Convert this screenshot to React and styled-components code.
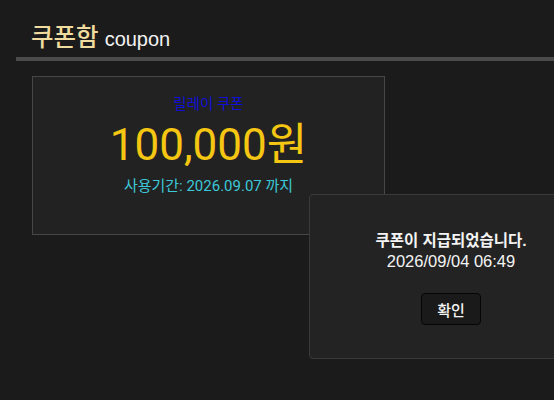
import React from "react";
import styled, { createGlobalStyle } from "styled-components";

const Global = createGlobalStyle`
  html, body { margin: 0; padding: 0; background: #1b1b1b; }
  body { font-family: "Liberation Sans", "Noto Sans CJK KR", sans-serif; overflow: hidden; }
  #root { width: 554px; height: 400px; position: relative; overflow: hidden; }
`;

const Page = styled.div`
  width: 554px;
  height: 400px;
  background: #1b1b1b;
  position: relative;
  overflow: hidden;
`;

const Header = styled.header`
  display: flex;
  align-items: baseline;
  gap: 6px;
  padding: 20px 0 0 31px;
  height: 37px;
  box-sizing: content-box;
`;

const Title = styled.h1`
  margin: 0;
  font-family: "Noto Sans CJK KR", sans-serif;
  font-size: 24.5px;
  font-weight: 500;
  line-height: 32px;
  color: #f0dc9e;
`;

const Sub = styled.span`
  font-family: "Liberation Sans", sans-serif;
  font-size: 20px;
  color: #f2f2f2;
`;

const Divider = styled.div`
  margin-left: 16px;
  height: 4px;
  background: #4b4b4b;
`;

const Content = styled.main`
  padding: 15px 0 0 32px;
`;

const Card = styled.section`
  width: 353px;
  height: 159px;
  box-sizing: border-box;
  border: 1px solid #474747;
  background: #222222;
  display: flex;
  flex-direction: column;
  align-items: center;
  padding-top: 18px;
  font-family: Roboto, "Noto Sans CJK KR", sans-serif;
`;

const Label = styled.div`
  font-size: 14.5px;
  line-height: 20px;
  color: #1010d8;
`;

const Amount = styled.div`
  font-size: 44px;
  line-height: 52px;
  color: #f5c612;
  margin-top: 4px;
`;

const Period = styled.div`
  font-size: 15px;
  line-height: 20px;
  color: #3cc8d8;
  margin-top: 5px;
`;

const Modal = styled.div`
  position: absolute;
  left: 309px;
  top: 194px;
  width: 284px;
  height: 165px;
  box-sizing: border-box;
  background: #232323;
  border: 1px solid #3a3a3a;
  border-radius: 4px;
  display: flex;
  flex-direction: column;
  align-items: center;
  padding-top: 35px;
  color: #f4f4f4;
`;

const Message = styled.div`
  font-size: 15.5px;
  font-weight: 700;
  line-height: 21px;
`;

const Date = styled.div`
  font-size: 16.5px;
  line-height: 21px;
`;

const Button = styled.button`
  margin-top: 21px;
  width: 60px;
  height: 32px;
  background: #1a1a1a;
  border: 1px solid #050505;
  border-radius: 4px;
  color: #f4f4f4;
  font-family: "Liberation Sans", "Noto Sans CJK KR", sans-serif;
  font-size: 15px;
  font-weight: 500;
  padding: 0;
`;

export default function App() {
  return (
    <Page>
      <Global />
      <Header>
        <Title>쿠폰함</Title>
        <Sub>coupon</Sub>
      </Header>
      <Divider />
      <Content>
        <Card>
          <Label>릴레이 쿠폰</Label>
          <Amount>100,000원</Amount>
          <Period>사용기간: 2026.09.07 까지</Period>
        </Card>
      </Content>
      <Modal>
        <Message>쿠폰이 지급되었습니다.</Message>
        <Date>2026/09/04 06:49</Date>
        <Button>확인</Button>
      </Modal>
    </Page>
  );
}
